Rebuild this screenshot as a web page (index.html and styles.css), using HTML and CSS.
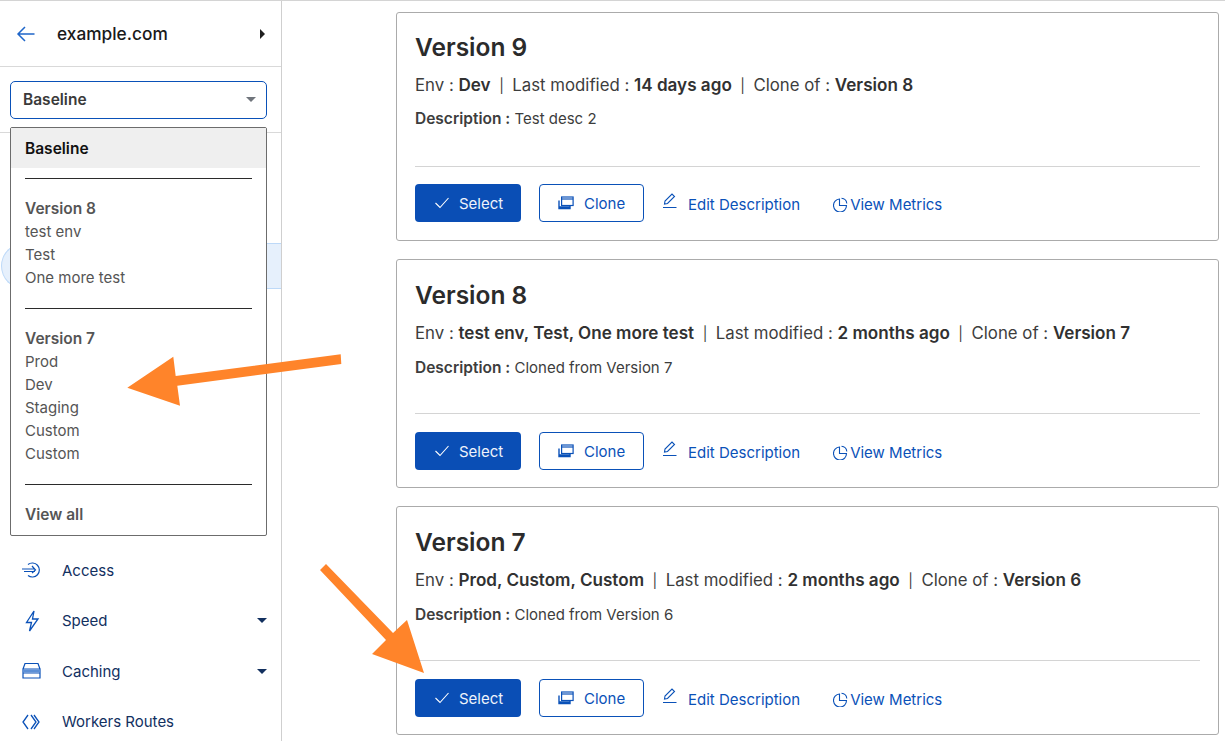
FILE: index.html
```html
<!DOCTYPE html>
<html lang="en">
<head>
<meta charset="utf-8">
<title>Versions</title>
<link rel="stylesheet" href="styles.css">
</head>
<body>
<div class="app">
  <aside class="sidebar">
    <header class="zone">
      <svg class="back" width="20" height="18" viewBox="0 0 20 18"><path d="M18.500 9H2M9 2L2 9l7 7" fill="none" stroke="#1f66c9" stroke-width="1.500"/></svg>
      <span class="zone-name">example.com</span>
      <span class="caret-right"></span>
    </header>
    <div class="select-wrap">
      <div class="select"><span>Baseline</span><span class="caret-down grey"></span></div>
    </div>
    <nav class="nav">
      <div class="nav-spacer"></div>
      <div class="nav-active"></div>
      <div class="nav-gap"></div>
      <a class="nav-item">
        <svg width="22" height="18" viewBox="0 0 22 18" fill="none" stroke="#0a51b8" stroke-width="1.200"><path d="M7 3.500A7 7 0 1 1 7 14.500"/><path d="M1 8h13M3 10.500h11M11 5l3.500 4-3.500 3"/></svg>
        <span>Access</span>
      </a>
      <a class="nav-item">
        <svg width="22" height="24" viewBox="0 0 22 24" fill="none" stroke="#0a51b8" stroke-width="1.300"><path d="M13 2L5.500 13.500h5L8.500 22 17 10h-5.500z"/></svg>
        <span>Speed</span>
        <span class="caret-down"></span>
      </a>
      <a class="nav-item">
        <svg width="22" height="18" viewBox="0 0 22 18" fill="none" stroke="#0a51b8" stroke-width="1.200"><path d="M2 7l2-5.500h13L19 7M2 7h17v4H2zM2 11h17v5H2z"/><path d="M2 7.500h17v3H2z" fill="#5c8fd6" stroke="none"/></svg>
        <span>Caching</span>
        <span class="caret-down"></span>
      </a>
      <a class="nav-item">
        <svg width="22" height="18" viewBox="0 0 22 18" fill="none" stroke="#0a51b8" stroke-width="1.300"><path d="M7 2L2 9l5 7M10 2l5 7-5 7M13 2l5 7-5 7"/></svg>
        <span>Workers Routes</span>
      </a>
    </nav>
    <div class="dropdown">
      <div class="dd-selected">Baseline</div>
      <hr class="dd-rule first">
      <div class="dd-group">
        <div class="dd-title">Version 8</div>
        <div>test env</div>
        <div>Test</div>
        <div>One more test</div>
      </div>
      <hr class="dd-rule">
      <div class="dd-group">
        <div class="dd-title">Version 7</div>
        <div>Prod</div>
        <div>Dev</div>
        <div>Staging</div>
        <div>Custom</div>
        <div>Custom</div>
      </div>
      <hr class="dd-rule">
      <div class="dd-all">View all</div>
    </div>
  </aside>
  <main class="main">
    <section class="card">
      <h2>Version 9</h2>
      <p class="meta">Env : <b>Dev</b><i>|</i>Last modified : <b>14 days ago</b><i>|</i>Clone of : <b>Version 8</b></p>
      <p class="desc"><b>Description :</b> Test desc 2</p>
      <div class="actions">
        <a class="btn primary"><svg width="16" height="12" viewBox="0 0 16 12" fill="none" stroke="#fff" stroke-width="1.100"><path d="M1.500 6l4.500 4.500L14.500 1"/></svg>Select</a>
        <a class="btn outline"><svg class="ic" width="16" height="14" viewBox="0 0 16 14" fill="none" stroke="#0a51b8" stroke-width="1.200"><rect x="3.600" y="1" width="11.500" height="8.500"/><path d="M3.600 3h11.500"/><path d="M1 4.500v8h11v-3M1 11h11" stroke-width="1.400"/></svg>Clone</a>
        <a class="link edit"><svg width="16" height="16" viewBox="0 0 16 16" fill="none" stroke="#0a51b8" stroke-width="1.100"><path d="M2.500 11l.5-3L10 1l2.500 2.500-7 7zM1 14.500h13.500"/></svg>Edit Description</a>
        <a class="link metrics"><svg width="15" height="15" viewBox="0 0 15 15" fill="none" stroke="#0a51b8" stroke-width="1.100"><path d="M6.500 2v6.500h7A6.500 6.500 0 1 1 6.500 2zM8.500 1.300A5.800 5.800 0 0 1 13.800 6.500"/></svg>View Metrics</a>
      </div>
    </section>
    <section class="card tall-gap">
      <h2>Version 8</h2>
      <p class="meta">Env : <b>test env, Test, One more test</b><i>|</i>Last modified : <b>2 months ago</b><i>|</i>Clone of : <b>Version 7</b></p>
      <p class="desc"><b>Description :</b> Cloned from Version 7</p>
      <div class="actions">
        <a class="btn primary"><svg width="16" height="12" viewBox="0 0 16 12" fill="none" stroke="#fff" stroke-width="1.100"><path d="M1.500 6l4.500 4.500L14.500 1"/></svg>Select</a>
        <a class="btn outline"><svg class="ic" width="16" height="14" viewBox="0 0 16 14" fill="none" stroke="#0a51b8" stroke-width="1.200"><rect x="3.600" y="1" width="11.500" height="8.500"/><path d="M3.600 3h11.500"/><path d="M1 4.500v8h11v-3M1 11h11" stroke-width="1.400"/></svg>Clone</a>
        <a class="link edit"><svg width="16" height="16" viewBox="0 0 16 16" fill="none" stroke="#0a51b8" stroke-width="1.100"><path d="M2.500 11l.5-3L10 1l2.500 2.500-7 7zM1 14.500h13.500"/></svg>Edit Description</a>
        <a class="link metrics"><svg width="15" height="15" viewBox="0 0 15 15" fill="none" stroke="#0a51b8" stroke-width="1.100"><path d="M6.500 2v6.500h7A6.500 6.500 0 1 1 6.500 2zM8.500 1.300A5.800 5.800 0 0 1 13.800 6.500"/></svg>View Metrics</a>
      </div>
    </section>
    <section class="card tall-gap">
      <h2>Version 7</h2>
      <p class="meta">Env : <b>Prod, Custom, Custom</b><i>|</i>Last modified : <b>2 months ago</b><i>|</i>Clone of : <b>Version 6</b></p>
      <p class="desc"><b>Description :</b> Cloned from Version 6</p>
      <div class="actions">
        <a class="btn primary"><svg width="16" height="12" viewBox="0 0 16 12" fill="none" stroke="#fff" stroke-width="1.100"><path d="M1.500 6l4.500 4.500L14.500 1"/></svg>Select</a>
        <a class="btn outline"><svg class="ic" width="16" height="14" viewBox="0 0 16 14" fill="none" stroke="#0a51b8" stroke-width="1.200"><rect x="3.600" y="1" width="11.500" height="8.500"/><path d="M3.600 3h11.500"/><path d="M1 4.500v8h11v-3M1 11h11" stroke-width="1.400"/></svg>Clone</a>
        <a class="link edit"><svg width="16" height="16" viewBox="0 0 16 16" fill="none" stroke="#0a51b8" stroke-width="1.100"><path d="M2.500 11l.5-3L10 1l2.500 2.500-7 7zM1 14.500h13.500"/></svg>Edit Description</a>
        <a class="link metrics"><svg width="15" height="15" viewBox="0 0 15 15" fill="none" stroke="#0a51b8" stroke-width="1.100"><path d="M6.500 2v6.500h7A6.500 6.500 0 1 1 6.500 2zM8.500 1.300A5.800 5.800 0 0 1 13.800 6.500"/></svg>View Metrics</a>
      </div>
    </section>
  </main>
</div>
<svg class="arrows" width="1225" height="741" viewBox="0 0 1225 741">
  <path d="M340.700 354.300L175.700 376 173.300 356.700 127.300 387.700 180 405.700 177.300 385.700 341.300 364z" fill="#ff842a"/>
  <path d="M326 564L320 570 386 640 372 654 424 673 407 620 393 633z" fill="#ff842a"/>
</svg>
</body>
</html>
```
FILE: styles.css
```css
* { box-sizing: border-box; }
html, body { margin: 0; height: 100%; overflow: hidden; background: #fff; }
body { font-family: Inter, "Liberation Sans", sans-serif; color: #313131; position: relative; }
b { font-weight: 600; }

.app { display: flex; height: 741px; border-top: 1px solid #d4d4d4; }

.sidebar { width: 282px; flex: none; border-right: 1px solid #cfcfcf; position: relative; }
.zone { height: 66px; border-bottom: 1px solid #d9d9d9; display: flex; align-items: center; padding: 0 16px; }
.back { flex: none; }
.zone-name { margin-left: 21px; font-size: 17.300px; font-weight: 500; color: #1a1a1a; flex: 1; }
.caret-right { width: 0; height: 0; border-left: 5px solid #1f1f1f; border-top: 5px solid transparent; border-bottom: 5px solid transparent; }

.select-wrap { height: 66px; border-bottom: 1px solid #d9d9d9; padding: 14px 14px 0 10px; }
.select { height: 38px; border: 1px solid #0a51b8; border-radius: 5px; display: flex; align-items: center; justify-content: space-between; padding: 0 10px 2px 12px; font-size: 15.500px; font-weight: 600; color: #3a3a3a; }
.caret-down { width: 0; height: 0; border-top: 5px solid #12305f; border-left: 5px solid transparent; border-right: 5px solid transparent; }
.caret-down.grey { border-top-color: #70757c; border-left-width: 5.500px; border-right-width: 5.500px; }

.nav { display: flex; flex-direction: column; }
.nav-spacer { height: 110px; }
.nav-active { height: 46px; margin-left: 1px; background: #e6f0fc; border-top: 1px solid #bdd9f8; border-bottom: 1px solid #bdd9f8; border-left: 1px solid #bdd9f8; border-radius: 23px 0 0 23px; }
.nav-gap { height: 256px; }
.nav-item { height: 50.500px; display: flex; align-items: center; padding: 0 14px 0 21px; font-size: 15px; color: #12305f; }
.nav-item svg { flex: none; }
.nav-item span:first-of-type { margin-left: 19px; flex: 1; }

.dropdown { position: absolute; left: 10px; top: 126px; width: 257px; height: 409px; background: #fff; border: 1px solid #6c6c6c; border-radius: 2px; font-size: 15px; line-height: 23px; color: #555; }
.dd-selected { height: 40px; background: #efefef; padding: 9px 14px 0; font-size: 15.500px; font-weight: 600; color: #111; }
.dd-rule { margin: 0 14px; border: 0; border-top: 1px solid #2b2b2b; height: 1px; }
.dd-rule.first { margin-top: 10px; }
.dd-group { padding: 18px 14px 19px; }
.dd-title { font-size: 15.500px; font-weight: 600; color: #555; }
.dd-all { padding: 18px 14px 0; font-size: 15.500px; font-weight: 600; }

.main { flex: 1; display: flex; flex-direction: column; gap: 18px; padding: 11px 6px 0 114px; min-width: 0; }
.card { height: 229px; flex: none; border: 1px solid #ababab; border-radius: 3px; padding: 0 18px; display: flex; flex-direction: column; }
.card h2 { margin: 18px 0 0; font-size: 24.500px; line-height: 32px; font-weight: 600; color: #2b2b2b; }
.meta { margin: 10px 0 0; font-size: 16.800px; line-height: 24px; color: #3d3d3d; }
.meta b { font-size: 17.100px; color: #313131; }
.meta i { font-style: normal; margin: 0 8.500px; font-size: 14px; }
.desc { margin: 10px 0 0; font-size: 15px; line-height: 22px; color: #3d3d3d; }
.desc b { font-size: 15.500px; }
.tall-gap h2 { margin-top: 19px; }
.tall-gap .desc { margin-top: 11px; }
.actions { margin-top: auto; border-top: 1px solid #d4d4d4; height: 74px; padding: 17px 0 0; display: flex; align-items: flex-start; }
.tall-gap .actions { padding-top: 18px; }
.btn { height: 38px; border-radius: 4px; display: flex; align-items: center; font-size: 15px; }
.primary { width: 106px; background: #0a4eb5; color: #eef3fb; padding-left: 19px; gap: 9px; }
.outline { width: 105px; margin-left: 18px; border: 1px solid #0a51b8; color: #0a51b8; padding-left: 18px; gap: 10px; }
.link { display: flex; align-items: center; height: 38px; padding-top: 2px; font-size: 15px; color: #0a51b8; }
.edit { margin-left: 18px; gap: 10px; }
.edit svg { margin-top: -6px; }
.metrics { margin-left: 33px; gap: 2px; }
.arrows { position: absolute; left: 0; top: 0; pointer-events: none; }
```
